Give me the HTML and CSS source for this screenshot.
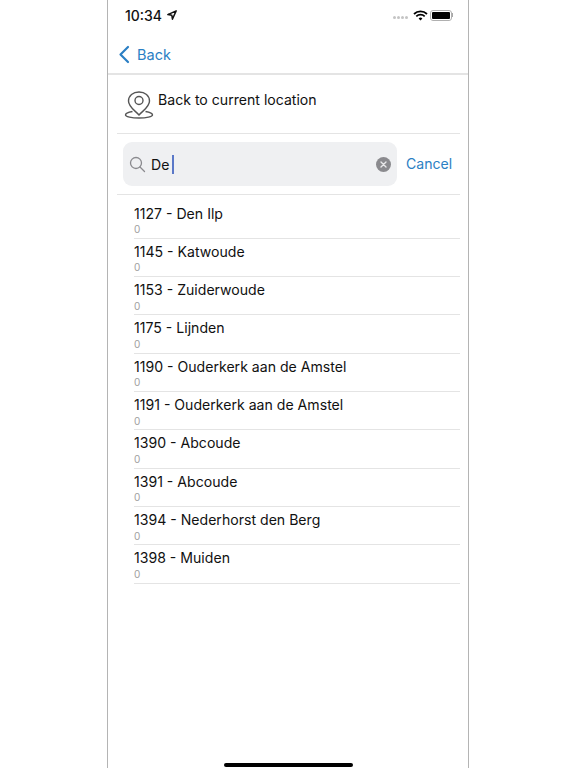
FILE: index.html
```html
<!DOCTYPE html>
<html lang="en">

<head>
    <meta charset="UTF-8">
    <title>Back to current location</title>
    <link rel="stylesheet" href="styles.css">
</head>

<body>
    <div class="phone">
        <div class="status-bar">
            <div class="status-left">
                <span class="time">10:34</span>
                <svg class="loc-arrow" width="10" height="10" viewBox="0 0 24 24" fill="none" stroke="#111" stroke-width="3.500" stroke-linejoin="round">
                    <path d="M22 2 2 11l9.500 1.500L13 22z" />
                </svg>
            </div>
            <div class="status-right">
                <div class="signal">
                    <i></i><i></i><i></i><i></i>
                </div>
                <svg width="15" height="11" viewBox="0 0 15 11" fill="none" stroke="#000" stroke-width="1.800">
                    <path d="M1 4a9.500 9.500 0 0 1 13 0" />
                    <path d="M3.300 6.300a6.200 6.200 0 0 1 8.400 0" />
                    <path d="M7.500 10.600 5.600 8.400a2.900 2.900 0 0 1 3.800 0z" fill="#000" stroke="none" />
                </svg>
                <div class="battery"><div class="battery-fill"></div></div>
                <div class="battery-cap"></div>
            </div>
        </div>

        <div class="nav-bar">
            <svg width="12" height="19" viewBox="0 0 12 19" fill="none" stroke="#2b7fc4" stroke-width="2.200" stroke-linecap="round" stroke-linejoin="round">
                <path d="M10 2 2.500 9.500 10 17" />
            </svg>
            <span class="back-label">Back</span>
        </div>

        <div class="location-row">
            <svg width="30" height="31" viewBox="0 0 30 31" fill="none" stroke="#555" stroke-width="1.400">
                <path d="M15 26C11 21.500 4.500 18 4.500 12 4.500 6.500 9 3 15 3s10.500 3.500 10.500 9c0 6-6.500 9.500-10.500 14z" />
                <circle cx="15" cy="11.500" r="4" />
                <path d="M8.500 22.500C4 23.300 1.500 24.500 1.500 26s6 3 13.500 3 13.500-1.500 13.500-3-2.500-2.700-7-3.500" />
            </svg>
            <span class="location-label">Back to current location</span>
        </div>

        <div class="search-row">
            <div class="search-box">
                <svg width="17" height="17" viewBox="0 0 17 17" fill="none" stroke="#8a8a8e" stroke-width="1.300" stroke-linecap="round">
                    <circle cx="7" cy="7" r="5.500" />
                    <path d="m11 11 4.500 4.500" />
                </svg>
                <span class="search-text">De</span>
                <span class="caret"></span>
                <span class="clear-btn">
                    <svg width="7" height="7" viewBox="0 0 7 7" stroke="#e8e8ea" stroke-width="1.400" stroke-linecap="round">
                        <path d="m1 1 5 5M6 1 1 6" />
                    </svg>
                </span>
            </div>
            <span class="cancel">Cancel</span>
        </div>

        <ul class="results">
            <li><span class="name">1127 - Den Ilp</span><span class="count">0</span></li>
            <li><span class="name">1145 - Katwoude</span><span class="count">0</span></li>
            <li><span class="name">1153 - Zuiderwoude</span><span class="count">0</span></li>
            <li><span class="name">1175 - Lijnden</span><span class="count">0</span></li>
            <li><span class="name">1190 - Ouderkerk aan de Amstel</span><span class="count">0</span></li>
            <li><span class="name">1191 - Ouderkerk aan de Amstel</span><span class="count">0</span></li>
            <li><span class="name">1390 - Abcoude</span><span class="count">0</span></li>
            <li><span class="name">1391 - Abcoude</span><span class="count">0</span></li>
            <li><span class="name">1394 - Nederhorst den Berg</span><span class="count">0</span></li>
            <li><span class="name">1398 - Muiden</span><span class="count">0</span></li>
        </ul>

        <div class="home-indicator"></div>
    </div>
</body>

</html>
```

FILE: styles.css
```css
* {
    margin: 0;
    padding: 0;
    box-sizing: border-box;
}

body {
    font-family: Inter, "Liberation Sans", sans-serif;
    height: 768px;
    overflow: hidden;
    background: #fff;
    color: #111;
}

.phone {
    position: relative;
    width: 362px;
    height: 768px;
    margin-left: 107px;
    border-left: 1px solid #b4b4b4;
    border-right: 1px solid #b4b4b4;
}

.status-bar {
    height: 30px;
    padding: 0 15px 0 17px;
    display: flex;
    justify-content: space-between;
    align-items: center;
}

.status-left {
    display: flex;
    align-items: center;
    gap: 5px;
}

.time {
    font-size: 14px;
    font-weight: 500;
}

.status-right {
    display: flex;
    align-items: center;
}

.signal {
    display: flex;
    gap: 1px;
    margin: 5px 5px 0 0;
}

.signal i {
    width: 3px;
    height: 3px;
    border-radius: 50%;
    background: #c4c4c4;
}

.battery {
    width: 22px;
    height: 11px;
    margin-left: 2px;
    padding: 1px;
    border: 1.500px solid #b0b0b0;
    border-radius: 3px;
}

.battery-fill {
    height: 100%;
    border-radius: 1px;
    background: #000;
}

.battery-cap {
    width: 1px;
    height: 4px;
    background: #a8a8a8;
}

.nav-bar {
    height: 45px;
    padding: 5px 0 0 10px;
    display: flex;
    align-items: center;
    gap: 7px;
    border-bottom: 2px solid #e4e4e4;
}

.back-label {
    font-size: 14.500px;
    color: #2b7fc4;
}

.location-row {
    height: 59px;
    margin: 0 8px 0 9px;
    padding: 14px 0 0 7px;
    display: flex;
    align-items: flex-start;
    border-bottom: 1px solid #e4e4e4;
}

.location-label {
    margin-left: 4px;
    font-size: 14.100px;
    line-height: 22px;
}

.search-row {
    height: 61px;
    margin: 0 8px 0 9px;
    padding: 0 6px;
    display: flex;
    align-items: center;
    border-bottom: 1px solid #e4e4e4;
}

.search-box {
    width: 274px;
    height: 44px;
    padding: 0 6px;
    display: flex;
    align-items: center;
    background: #eff0f2;
    border-radius: 9px;
}

.search-text {
    margin-left: 5px;
    font-size: 14.100px;
}

.caret {
    width: 2px;
    height: 19px;
    margin-left: 3px;
    background: #5a78c8;
}

.clear-btn {
    width: 15px;
    height: 15px;
    margin-left: auto;
    display: flex;
    align-items: center;
    justify-content: center;
    background: #8a8a8e;
    border-radius: 50%;
}

.cancel {
    margin: 0 0 1px 9px;
    font-size: 14.100px;
    color: #2b7fc4;
}

.results {
    list-style: none;
    margin: 5.500px 8px 0 26px;
}

.results li {
    height: 38.330px;
    padding-top: 4px;
    border-bottom: 1px solid #e4e4e4;
}

.name {
    display: block;
    font-size: 14.100px;
    line-height: 18px;
}

.count {
    display: block;
    font-size: 10px;
    line-height: 11px;
    margin-top: 1.500px;
    color: #a0a0a0;
}

.home-indicator {
    position: absolute;
    left: 116px;
    bottom: 1px;
    width: 129px;
    height: 4px;
    border-radius: 2px;
    background: #000;
}
```
